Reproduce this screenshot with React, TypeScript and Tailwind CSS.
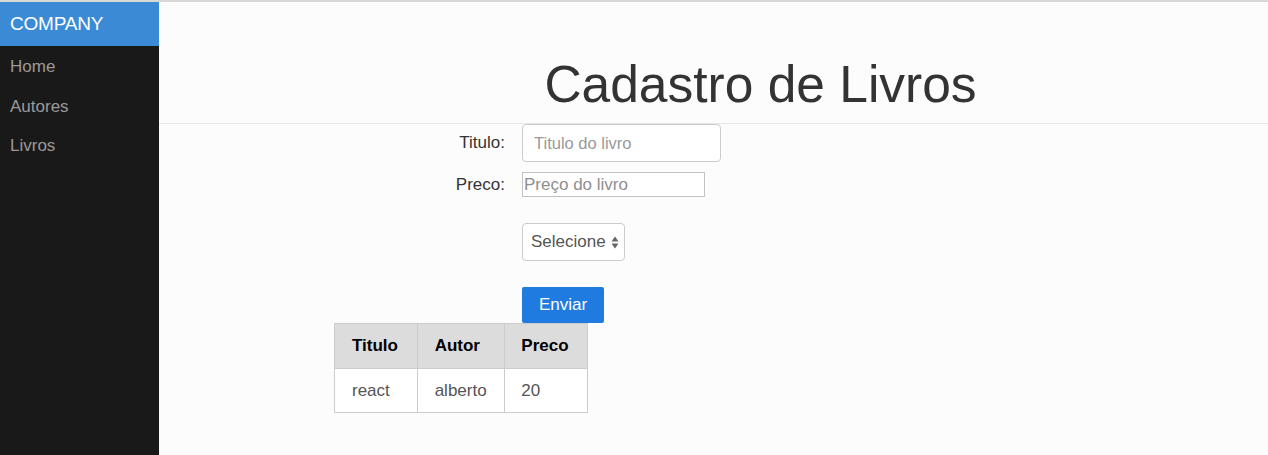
import * as React from "react"

const font = { fontFamily: '"Liberation Sans", Arial, sans-serif' }

function Sidebar() {
    return (
        <aside className="w-[159px] shrink-0 bg-[#1a1919]">
            <div className="h-[44px] bg-[#3a8ad6] pl-[10px] flex items-center text-white text-[19px] tracking-[-0.2px]">COMPANY</div>
            <nav className="flex flex-col pt-[1px]">
                {["Home", "Autores", "Livros"].map(item => (
                    <a key={item} className="h-[39.5px] pl-[10px] flex items-center text-[17px] text-[#9a9a9a]">{item}</a>
                ))}
            </nav>
        </aside>
    )
}

function SelectArrows() {
    return (
        <svg width="8" height="13" viewBox="0 0 8 13" className="ml-[5px]">
            <path d="M4 0.5 L7.5 5.5 L0.5 5.5 Z" fill="#666" />
            <path d="M4 12.5 L7.5 7.5 L0.5 7.5 Z" fill="#666" />
        </svg>
    )
}

export default function App() {
    const livros = [{ titulo: "react", autor: "alberto", preco: "20" }]

    return (
        <div className="w-[1268px] h-[455px] flex flex-col bg-[#fdfcfd] overflow-hidden" style={font}>
            <div className="h-[2px] bg-[#d8d8d8] shrink-0" />
            <div className="flex flex-1">
                <Sidebar />
                <main className="flex-1 flex flex-col">
                    <div className="h-[122px] border-b border-[#e6e6e6] flex items-end justify-center pb-[13px] pl-[94px]">
                        <h1 className="text-[51.5px] leading-none text-[#333] font-light">Cadastro de Livros</h1>
                    </div>

                    <div className="flex flex-col ml-[241px]">
                        <div className="flex items-center h-[38px]">
                            <label className="w-[105px] text-right text-[17px] text-[#333] mr-[17px]">Titulo:</label>
                            <input className="w-[199px] h-[38px] border border-[#cccccc] rounded-[4px] px-[11px] text-[16.5px] bg-white placeholder:text-[#999]" placeholder="Titulo do livro" />
                        </div>
                        <div className="flex items-center h-[25px] mt-[10px]">
                            <label className="w-[105px] text-right text-[17px] text-[#333] mr-[17px]">Preco:</label>
                            <input className="w-[183px] h-[25px] border border-[#c2c2c2] px-[1px] text-[17px] bg-white placeholder:text-[#8f8f8f]" placeholder="Preço do livro" />
                        </div>
                        <div className="flex items-center mt-[26px] ml-[122px]">
                            <div className="h-[38px] w-[103px] border border-[#cccccc] rounded-[4px] bg-white flex items-center pl-[8px] text-[17px] text-[#555]">
                                Selecione
                                <SelectArrows />
                            </div>
                        </div>
                        <div className="mt-[26px] ml-[122px]">
                            <button className="h-[36px] w-[82px] bg-[#1f7be0] rounded-[2px] text-white text-[17px]">Enviar</button>
                        </div>
                    </div>

                    <table className="ml-[175px] border-collapse border border-[#cccccc] text-[17px] w-[254px]">
                        <thead>
                            <tr className="bg-[#dddcdd] h-[45px]">
                                <th className="w-[83px] text-left pl-[17px] border border-[#cccccc] font-bold text-black">Titulo</th>
                                <th className="w-[88px] text-left pl-[17px] border border-[#cccccc] font-bold text-black">Autor</th>
                                <th className="w-[83px] text-left pl-[16px] border border-[#cccccc] font-bold text-black">Preco</th>
                            </tr>
                        </thead>
                        <tbody>
                            {livros.map(l => (
                                <tr key={l.titulo} className="h-[44px] bg-white">
                                    <td className="pl-[17px] border border-[#cccccc] text-[#555]">{l.titulo}</td>
                                    <td className="pl-[17px] border border-[#cccccc] text-[#555]">{l.autor}</td>
                                    <td className="pl-[16px] border border-[#cccccc] text-[#555]">{l.preco}</td>
                                </tr>
                            ))}
                        </tbody>
                    </table>
                </main>
            </div>
        </div>
    )
}
